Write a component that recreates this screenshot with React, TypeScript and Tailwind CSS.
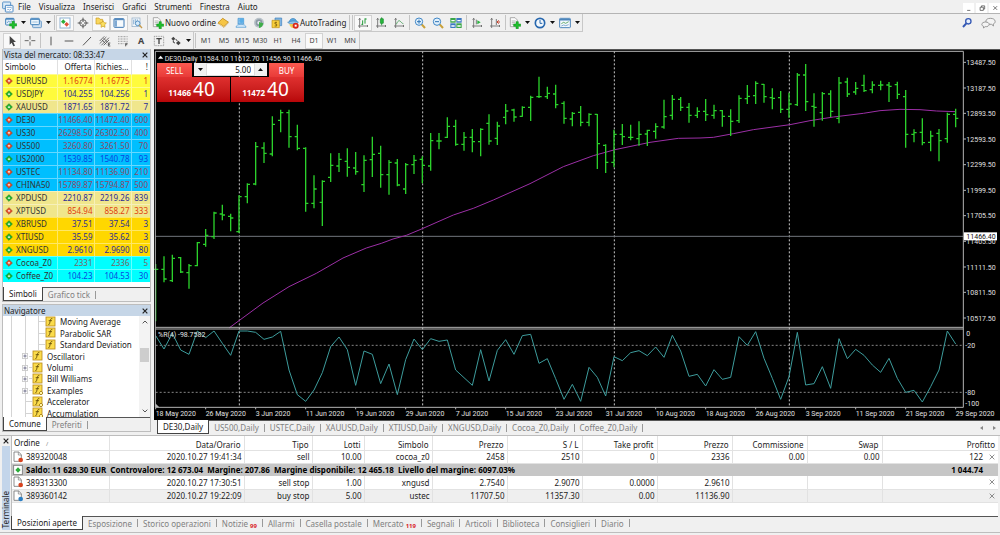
import { ReactNode } from "react"
import clsx from "clsx"

/* ---------- icons (36 x 36 grid, 3 units per pixel) ---------- */

const Icon = ({ children }: { children: ReactNode }) => (
  <svg viewBox="0 0 36 36" className="h-3 w-3 shrink-0" fill="none" aria-hidden>
    {children}
  </svg>
)

const Plus = ({ x, y }: { x: number; y: number }) => (
  <path
    transform={`translate(${x} ${y})`}
    d="M7 0h7v7h7v7h-7v7H7v-7H0V7h7z"
    fill="#1fbf2c"
    stroke="#0a8a18"
    strokeWidth="1.5"
  />
)

const AppLogo = () => (
  <Icon>
    <rect x="2" y="3" width="24" height="20" rx="2" fill="#dcebf8" stroke="#5b93c8" strokeWidth="3" />
    <rect x="10" y="13" width="23" height="20" rx="2" fill="#fff" stroke="#4a87c2" strokeWidth="3" />
    <path d="M14 19h15M15 28l4-4 4 4 5-5" stroke="#4a87c2" strokeWidth="2" />
  </Icon>
)

const NewChartIcon = () => (
  <Icon>
    <rect x="2" y="4" width="25" height="20" rx="2" fill="#e4f0fa" stroke="#3f7fb8" strokeWidth="3" />
    <path d="M3 6h23" stroke="#3f7fb8" strokeWidth="4" />
    <path d="M6 18l5-6 4 4 6-5" stroke="#3f7fb8" strokeWidth="2" />
    <Plus x={14} y={13} />
  </Icon>
)

const ProfilesIcon = () => (
  <Icon>
    <rect x="8" y="12" width="26" height="20" rx="2" fill="#cfe1f2" stroke="#6d9cc8" strokeWidth="3" />
    <rect x="2" y="4" width="26" height="19" rx="2" fill="#eef6fc" stroke="#3f7fb8" strokeWidth="3" />
    <path d="M3 7h24" stroke="#5a93c6" strokeWidth="4" />
    <path d="M7 15h16" stroke="#9cc0de" strokeWidth="3" />
  </Icon>
)

const MarketIcon = () => (
  <Icon>
    <rect x="3" y="3" width="30" height="30" fill="#fff" stroke="#8fb2d2" strokeWidth="3" />
    <path d="M13 7l7 7-7 7-7-7z" fill="#2cae3a" />
    <path d="M23 15l7 7-7 7-7-7z" fill="#e0503a" />
  </Icon>
)

const TargetIcon = () => (
  <Icon>
    <circle cx="18" cy="18" r="10" stroke="#666" strokeWidth="3" />
    <path d="M18 2v13M18 21v13M2 18h13M21 18h13" stroke="#555" strokeWidth="3" />
  </Icon>
)

const NavigatorIcon = () => (
  <Icon>
    <path d="M3 8V3h9l3 4h8v14H3z" fill="#f9d75e" stroke="#c99a1e" strokeWidth="2" />
    <path d="M24 11l3.500 6 6.500 1-5 5 1 8-6-3.500-6 3.500 1-8-5-5 6.500-1z" fill="#fbe05f" stroke="#c99a1e" strokeWidth="2" />
  </Icon>
)

const TerminalIcon = () => (
  <Icon>
    <rect x="3" y="5" width="30" height="26" rx="2" fill="#f6fafd" stroke="#3d78b4" strokeWidth="3" />
    <path d="M4 8h28" stroke="#3d78b4" strokeWidth="3" />
    <rect x="5" y="10" width="7" height="19" fill="#7fa9d2" />
  </Icon>
)

const TesterIcon = () => (
  <Icon>
    <rect x="3" y="3" width="24" height="26" fill="#f2f7fb" stroke="#8ca9c4" strokeWidth="2" />
    <path d="M8 8v14M13 6v10M19 7v5" stroke="#5a8fc0" strokeWidth="2" />
    <circle cx="20" cy="19" r="7" fill="#d5eafa" stroke="#5591c4" strokeWidth="3" />
    <path d="M25 24l8 9" stroke="#c59a4a" strokeWidth="4" />
  </Icon>
)

const PagePlusIcon = () => (
  <Icon>
    <path d="M4 2h14l7 7v20H4z" fill="#fbfbfb" stroke="#888" strokeWidth="2" />
    <path d="M8 12h12M8 17h10M8 22h6" stroke="#999" strokeWidth="2" />
    <Plus x={14} y={14} />
  </Icon>
)

const BookIcon = () => (
  <Icon>
    <path d="M3 19L17 5l17 12-13 14z" fill="#d99a1a" stroke="#a86f0c" strokeWidth="2" />
    <path d="M3 17L17 4l17 11-14 13z" fill="#f6c545" stroke="#c08a1a" strokeWidth="2" />
    <path d="M5 20l15 10 13-13" stroke="#fff3cf" strokeWidth="2" />
  </Icon>
)

const CommunityIcon = () => (
  <Icon>
    <path d="M9 4h17v17H9z" fill="#8cc4ee" stroke="#3f8fcc" strokeWidth="2" />
    <circle cx="20" cy="11" r="7" fill="#5caee6" />
    <path d="M3 31c0-6 6-9 15-9s15 3 15 9z" fill="#cfe6f8" stroke="#4b97d2" strokeWidth="2" />
  </Icon>
)

const SignalIcon = () => (
  <Icon>
    <circle cx="18" cy="17" r="15" fill="#b9c2c9" />
    <circle cx="18" cy="17" r="10" fill="#8c9aa5" />
    <circle cx="18" cy="17" r="5" fill="#e8edf0" />
    <path d="M18 15l13 4c-1 8-6 13-13 14z" fill="#3fae49" />
  </Icon>
)

const ShopIcon = () => (
  <Icon>
    <path d="M12 3h20v23H12z" fill="#7fb4e2" stroke="#3c7fbd" strokeWidth="2" />
    <path d="M3 10h22v22H3z" fill="#f8cf3c" stroke="#bb8c12" strokeWidth="2" />
    <path d="M18 16h-6v5h5v6h-6" stroke="#7b5a06" strokeWidth="2.500" />
  </Icon>
)

const AutoIcon = () => (
  <Icon>
    <path d="M7 15c1-14 21-14 22 0z" fill="#5aa7de" stroke="#3a80ba" strokeWidth="2" />
    <path d="M2 16c8-5 25-5 32-1-4 6-9 6-14 6S6 20 2 16z" fill="#8cc6ee" stroke="#3a80ba" strokeWidth="2" />
    <path d="M7 21c1 7 5 12 12 12s9-6 9-12z" fill="#f2cb52" />
    <circle cx="26" cy="26" r="9" fill="#d9281a" />
    <rect x="23" y="23" width="6" height="6" fill="#fff" />
  </Icon>
)

const Axes = () => (
  <path d="M8 4v29M3 27h30M5 8l3-4 3 4M30 24l3 3-3 3" stroke="#666" strokeWidth="2.500" />
)

const BarsIcon = () => (
  <Icon>
    <Axes />
    <path d="M17 10v14M24 4v16M13 22h4M24 6h5" stroke="#249a3a" strokeWidth="3" />
  </Icon>
)

const CandleIcon = () => (
  <Icon>
    <Axes />
    <path d="M20 1v24" stroke="#168a2a" strokeWidth="2.500" />
    <rect x="16" y="5" width="9" height="14" rx="1" fill="#26b83c" stroke="#168a2a" strokeWidth="2" />
  </Icon>
)

const LineIcon = () => (
  <Icon>
    <Axes />
    <path d="M10 22c4-10 8-13 12-9s5 6 9 7" stroke="#3d9a50" strokeWidth="2.500" />
  </Icon>
)

const ZoomIcon = ({ plus }: { plus?: boolean }) => (
  <Icon>
    <path d="M23 22l10 11" stroke="#c9a13a" strokeWidth="6" />
    <circle cx="15" cy="14" r="11" fill="#e2f1fc" stroke="#3f86c6" strokeWidth="3" />
    <path d={plus ? "M9 14h12M15 8v12" : "M9 14h12"} stroke="#2f74b5" strokeWidth="3" />
  </Icon>
)

const TileIcon = () => (
  <Icon>
    <rect x="1" y="3" width="16" height="14" fill="#3aa648" />
    <rect x="19" y="3" width="16" height="14" fill="#3c78c2" />
    <rect x="1" y="19" width="16" height="14" fill="#3c78c2" />
    <rect x="19" y="19" width="16" height="14" fill="#3aa648" />
    <path d="M4 11h10M22 11h10M4 27h10M22 27h10" stroke="#fff" strokeWidth="4" />
  </Icon>
)

const ScrollIcon = () => (
  <Icon>
    <Axes />
    <path d="M16 8v14" stroke="#666" strokeWidth="2.500" />
    <path d="M19 10l10 6-10 6z" fill="#2bb23f" />
  </Icon>
)

const ShiftIcon = () => (
  <Icon>
    <Axes />
    <path d="M22 6v18" stroke="#666" strokeWidth="2.500" />
    <path d="M33 15H24M29 10l-5 5 5 5" stroke="#c8452f" strokeWidth="3" />
  </Icon>
)

const ClockIcon = () => (
  <Icon>
    <circle cx="18" cy="18" r="14" fill="#f2f8fd" stroke="#2767ae" strokeWidth="5" />
    <path d="M18 9v10h7" stroke="#2767ae" strokeWidth="3" />
  </Icon>
)

const TemplateIcon = () => (
  <Icon>
    <rect x="2" y="4" width="32" height="28" rx="2" fill="#f4f9fd" stroke="#4d85bb" strokeWidth="3" />
    <path d="M3 8h30" stroke="#4d85bb" strokeWidth="5" />
    <path d="M7 20l7-4 6 3 9-5" stroke="#4c9c58" strokeWidth="2.500" />
    <path d="M7 27l7-3 6 2 9-3" stroke="#4d85bb" strokeWidth="2" />
  </Icon>
)

const CursorIcon = () => (
  <Icon>
    <path d="M11 3v26l6-6 5 11 5-2-5-11h8z" fill="#444" />
  </Icon>
)

const CrossIcon = () => (
  <Icon>
    <path d="M18 3v11M18 20v12M2 17h12M22 17h12" stroke="#666" strokeWidth="3" />
  </Icon>
)

const StrokeIcon = ({ d }: { d: string }) => (
  <Icon>
    <path d={d} stroke="#555" strokeWidth="3" />
  </Icon>
)

const ChannelIcon = () => (
  <Icon>
    <path d="M2 26L22 6M7 31L30 8M2 18L16 4M14 31l16-16M8 14l14 14M14 10l12 12" stroke="#555" strokeWidth="2.500" />
    <path d="M34 24h-6v9h6M28 28h5" stroke="#444" strokeWidth="2.500" />
  </Icon>
)

const FiboIcon = () => (
  <Icon>
    <path d="M3 5h29M3 12h29M3 19h29M3 26h19" stroke="#777" strokeWidth="2" strokeDasharray="3 1.500" />
    <path d="M26 34v-9h6M26 29h5" stroke="#444" strokeWidth="2.500" />
  </Icon>
)

const LabelIcon = () => (
  <Icon>
    <rect x="4" y="4" width="28" height="28" stroke="#777" strokeWidth="2" strokeDasharray="3 2" />
    <path d="M10 11h16M18 11v16" stroke="#444" strokeWidth="4" />
  </Icon>
)

const ArrowsIcon = () => (
  <Icon>
    <path d="M10 5l6 6-6 6-6-6z" fill="#444" />
    <path d="M10 17v5l5 2M17 12l5 6" stroke="#444" strokeWidth="3" />
    <path d="M25 17l7 7-7 7-7-7z" fill="#444" />
  </Icon>
)

const FuncIcon = ({ badge }: { badge?: boolean }) => (
  <Icon>
    <rect x="3" y="3" width="27" height="27" fill="#fbdc4c" stroke="#b98d1c" strokeWidth="2.500" />
    <path d="M22 8c-4-1-5 1-6 5l-2 9c-1 4-2 4-4 3M11 14h10" stroke="#5c4606" strokeWidth="2.500" />
    {badge && <path d="M27 21l6 6-6 6-6-6z" fill="#fff3a5" stroke="#a07a10" strokeWidth="2.500" />}
  </Icon>
)

const DiamondIcon = ({ up }: { up: boolean }) => (
  <svg viewBox="0 0 24 24" className="h-2 w-2 shrink-0" aria-hidden>
    <path d="M12 2l10 10-10 10L2 12z" fill={up ? "#22b432" : "#e4502c"} stroke={up ? "#14801f" : "#a8351a"} strokeWidth="2" />
    <path d={up ? "M12 8l4 6H8z" : "M12 16l4-6H8z"} fill="#fff" />
  </svg>
)

const OrderIcon = ({ color }: { color: string }) => (
  <Icon>
    <path d="M6 3h14l8 8v20H6z" fill="#fff" stroke="#777" strokeWidth="2.500" />
    <path d="M19 3v9h9" stroke="#777" strokeWidth="2" />
    <circle cx="26" cy="27" r="7" fill={color} />
  </Icon>
)

const BalanceIcon = () => (
  <Icon>
    <rect x="5" y="4" width="26" height="28" fill="#fff" stroke="#777" strokeWidth="2.500" />
    <path d="M18 10l8 8-8 8-8-8z" fill="#2bad3a" />
  </Icon>
)

/* ---------- toolbars ---------- */

const Sep = () => <span className="mx-px h-[15px] w-px bg-[#c4c4c4]" />

const Caret = () => (
  <svg viewBox="0 0 12 7" className="h-[3px] w-[5px]" aria-hidden>
    <path d="M0 0h12L6 7z" fill="#111" />
  </svg>
)

const Tool = ({ label, pressed, drop, children }: { label: string; pressed?: boolean; drop?: boolean; children: ReactNode }) => (
  <button
    aria-label={label}
    className={clsx(
      "flex h-[16px] items-center justify-center",
      drop ? "w-[25px] gap-1" : "w-[18px]",
      pressed && "border border-[#d2d2d2] bg-[#f9f9f9]"
    )}
  >
    {children}
    {drop && <Caret />}
  </button>
)

const MENU = ["File", "Visualizza", "Inserisci", "Grafici", "Strumenti", "Finestra", "Aiuto"]
const FRAMES = ["M1", "M5", "M15", "M30", "H1", "H4", "D1", "W1", "MN"]

const MenuBar = () => (
  <header className="flex h-[14px] items-center border-b border-[#b4b4b4] pl-0.5">
    <AppLogo />
    <nav className="ml-1 flex flex-1 gap-2">
      {MENU.map((m) => (
        <button key={m}>{m}</button>
      ))}
    </nav>
    <div className="flex gap-0.5 self-end">
      {["M8 24h12", "M8 12h12v12H8zM13 12V7h12v12h-5", "M9 8l14 14M23 8L9 22"].map((d, i) => (
        <button key={d} aria-label={["Riduci", "Ripristina", "Chiudi"][i]} className="flex h-[10px] w-[11px] items-center justify-center bg-white">
          <svg viewBox="0 0 30 30" className="h-2 w-2" fill="none">
            <path d={d} stroke="#555" strokeWidth="3" />
          </svg>
        </button>
      ))}
    </div>
  </header>
)

const MainToolbar = () => (
  <div className="flex h-[18px] items-center">
    <div className="flex h-[18px] items-center border-b border-r border-[#c8c8c8] pl-[3px]">
      <Tool label="Nuovo grafico" drop><NewChartIcon /></Tool>
      <Tool label="Profili" drop><ProfilesIcon /></Tool>
      <Sep />
      <Tool label="Vista del mercato" pressed><MarketIcon /></Tool>
      <Tool label="Finestra dati"><TargetIcon /></Tool>
      <Tool label="Navigatore" pressed><NavigatorIcon /></Tool>
      <Tool label="Terminale" pressed><TerminalIcon /></Tool>
      <Tool label="Tester"><TesterIcon /></Tool>
      <Sep />
      <button className="flex w-[65px] items-center gap-px pl-[3px] whitespace-nowrap"><PagePlusIcon />Nuovo ordine</button>
      <Tool label="MetaEditor"><BookIcon /></Tool>
      <Tool label="Community"><CommunityIcon /></Tool>
      <Tool label="Segnali"><SignalIcon /></Tool>
      <Tool label="Market"><ShopIcon /></Tool>
      <button className="flex w-[62px] items-center gap-px pl-px whitespace-nowrap"><AutoIcon />AutoTrading</button>
      <Sep />
      <Sep />
      <Tool label="Barre" pressed><BarsIcon /></Tool>
      <Tool label="Candele"><CandleIcon /></Tool>
      <Tool label="Linea"><LineIcon /></Tool>
      <Sep />
      <Tool label="Ingrandisci"><ZoomIcon plus /></Tool>
      <Tool label="Riduci"><ZoomIcon /></Tool>
      <Tool label="Affianca"><TileIcon /></Tool>
      <Sep />
      <Tool label="Scorrimento automatico"><ScrollIcon /></Tool>
      <Tool label="Spostamento grafico"><ShiftIcon /></Tool>
      <Sep />
      <Tool label="Indicatori" drop><PagePlusIcon /></Tool>
      <Tool label="Periodi" drop><ClockIcon /></Tool>
      <Tool label="Modelli" drop><TemplateIcon /></Tool>
    </div>
    <div className="ml-auto flex items-center gap-2 pr-1">
      <button aria-label="Cerca">
        <Icon>
          <circle cx="22" cy="13" r="8" fill="#e8f0fb" stroke="#3559b4" strokeWidth="4" />
          <path d="M16 19L6 30" stroke="#3559b4" strokeWidth="6" />
        </Icon>
      </button>
      <button aria-label="Chat">
        <svg viewBox="0 0 44 36" className="h-3 w-[15px]" fill="#f4f4f4" stroke="#888" strokeWidth="2.500">
          <path d="M28 4c8 0 14 4 14 9s-3 7-6 8l1 6-6-5c-9 1-17-3-17-9s6-9 14-9z" />
          <path d="M13 15c7 0 11 3 11 7s-5 8-12 7l-5 4v-5c-3-1-5-3-5-6 0-4 5-7 11-7z" />
        </svg>
      </button>
    </div>
  </div>
)

const DrawToolbar = () => (
  <div className="flex h-[17px] items-center text-[#444]">
    <div className="flex h-[17px] items-center border-r border-[#c8c8c8] pl-[3px]">
      <Tool label="Cursore" pressed><CursorIcon /></Tool>
      <Tool label="Mirino"><CrossIcon /></Tool>
      <Sep />
      <Tool label="Linea verticale"><StrokeIcon d="M18 5v26" /></Tool>
      <Tool label="Linea orizzontale"><StrokeIcon d="M5 18h26" /></Tool>
      <Tool label="Trendline"><StrokeIcon d="M6 31L30 6" /></Tool>
      <Tool label="Canale"><ChannelIcon /></Tool>
      <Tool label="Fibonacci"><FiboIcon /></Tool>
      <Tool label="Testo"><b className="text-[9px]">A</b></Tool>
      <Tool label="Etichetta"><LabelIcon /></Tool>
      <Tool label="Frecce" drop><ArrowsIcon /></Tool>
    </div>
    <div className="flex h-[17px] items-center border-r border-[#c8c8c8] text-[7px]">
      <Sep />
      {FRAMES.map((f) => (
        <button key={f} className={clsx("h-[16px] w-[18px]", f === "D1" && "border border-[#d2d2d2] bg-[#f9f9f9]")}>
          {f}
        </button>
      ))}
    </div>
  </div>
)

/* ---------- side panels ---------- */

const PanelTitle = ({ children }: { children: ReactNode }) => (
  <div className="flex h-[11px] items-center justify-between bg-[#c6d6e7] px-px">
    <span>{children}</span>
    <button aria-label="Chiudi" className="pr-px"><CloseMark /></button>
  </div>
)

const CloseMark = ({ thin }: { thin?: boolean }) => (
  <svg viewBox="0 0 18 18" className="h-[6px] w-[6px]" aria-hidden>
    <path d="M2 2l14 14M16 2L2 16" stroke={thin ? "#777" : "#222"} strokeWidth={thin ? 2.5 : 3.5} />
  </svg>
)

type Tab = { name: string; count?: number }

const Tabs = ({ tabs, children }: { tabs: Tab[]; children?: ReactNode }) => (
  <div className="flex h-[14px] items-stretch text-[#808080]">
    {tabs.map((t, i) => (
      <button
        key={t.name}
        className={clsx(
          "relative flex items-center whitespace-nowrap",
          i === 0
            ? "border-x border-b border-[#444] bg-white px-[5px] text-[#222]"
            : "border-t border-[#555] pr-1.5 pl-[5px] after:absolute after:right-0 after:h-2 after:w-px after:bg-[#999]"
        )}
      >
        {t.name}
        {t.count && <span className="self-end pl-0.5 text-[6px] leading-[8px] font-bold text-[#d8232a]">{t.count}</span>}
      </button>
    ))}
    <div className="flex flex-1 items-center justify-end gap-2 border-t border-[#555] pr-1">{children}</div>
  </div>
)

const YELLOW = "bg-[#fffb3c]"
const KHAKI = "bg-[#f0e68c]"
const SKY = "bg-[#00bfff]"
const GOLD = "bg-[#ffd700]"
const AQUA = "bg-[#00ffff]"
const RED = "text-[#e0400f]"
const NAVY = "text-[#2c2c96]"
const WINE = "text-[#8c4a68]"
const BLUE = "text-[#0a45e0]"

const QUOTES: [string, boolean, string, string, string, string, string][] = [
  ["EURUSD", false, "1.16774", "1.16775", "1", YELLOW, RED],
  ["USDJPY", true, "104.255", "104.256", "1", YELLOW, NAVY],
  ["XAUUSD", true, "1871.65", "1871.72", "7", KHAKI, NAVY],
  ["DE30", false, "11466.40", "11472.40", "600", SKY, WINE],
  ["US30", false, "26298.50", "26302.50", "400", SKY, WINE],
  ["US500", false, "3260.80", "3261.50", "70", SKY, WINE],
  ["US2000", true, "1539.85", "1540.78", "93", SKY, BLUE],
  ["USTEC", false, "11134.80", "11136.90", "210", SKY, WINE],
  ["CHINA50", false, "15789.87", "15794.87", "500", SKY, WINE],
  ["XPDUSD", true, "2210.87", "2219.26", "839", KHAKI, NAVY],
  ["XPTUSD", false, "854.94", "858.27", "333", KHAKI, RED],
  ["XBRUSD", true, "37.51", "37.54", "3", GOLD, NAVY],
  ["XTIUSD", true, "35.59", "35.62", "3", GOLD, NAVY],
  ["XNGUSD", true, "2.9610", "2.9690", "80", GOLD, NAVY],
  ["Cocoa_Z0", false, "2331", "2336", "5", AQUA, "text-[#7c6464]"],
  ["Coffee_Z0", true, "104.23", "104.53", "30", AQUA, BLUE],
]

const MarketWatch = () => (
  <section className="border-x border-b border-[#bdbdbd]">
    <PanelTitle>Vista del mercato: 08:33:47</PanelTitle>
    <div className="bg-white pb-[5px]">
      <table className="w-full table-fixed border-collapse text-right">
        <colgroup>
          <col />
          <col className="w-[37px]" />
          <col className="w-[37px]" />
          <col className="w-[19px]" />
        </colgroup>
        <thead>
          <tr className="h-[14px]">
            <th className="pl-0.5 text-left font-normal">Simbolo</th>
            <th className="border-l border-[#e0e0e0] pr-0.5 font-normal">Offerta</th>
            <th className="border-l border-[#e0e0e0] pr-0.5 font-normal">Richies...</th>
            <th className="border-l border-[#e0e0e0] pr-0.5 font-normal">!</th>
          </tr>
        </thead>
        <tbody>
          {QUOTES.map(([name, up, bid, ask, spread, bg, fg]) => (
            <tr key={name} className={clsx("h-[13px] border-t border-white/40", bg, fg)}>
              <td className="text-left text-[#333]">
                <span className="flex items-center gap-[3px] pl-0.5">
                  <DiamondIcon up={up} />
                  {name}
                </span>
              </td>
              <td className="border-l border-white/40 pr-px">{bid}</td>
              <td className="border-l border-white/40 pr-px">{ask}</td>
              <td className="border-l border-white/40 pr-0.5">{spread}</td>
            </tr>
          ))}
        </tbody>
      </table>
    </div>
    <Tabs tabs={[{ name: "Simboli" }, { name: "Grafico tick" }]} />
  </section>
)

const TREE: { name: string; deep?: boolean; plus?: boolean; badge?: boolean }[] = [
  { name: "Moving Average", deep: true },
  { name: "Parabolic SAR", deep: true },
  { name: "Standard Deviation", deep: true },
  { name: "Oscillatori", plus: true },
  { name: "Volumi", plus: true },
  { name: "Bill Williams", plus: true },
  { name: "Examples", plus: true, badge: true },
  { name: "Accelerator", badge: true },
  { name: "Accumulation", badge: true },
]

const Navigator = () => (
  <section className="mt-0.5 border border-[#bdbdbd]">
    <PanelTitle>Navigatore</PanelTitle>
    <div className="flex h-[101px] overflow-hidden bg-white">
      <ul className="grid h-[103px] flex-1 auto-rows-fr">
        {TREE.map((n) => (
          <li key={n.name} className="flex items-center">
            <span className="h-full w-[9px] border-r border-[#d4d4d4]" />
            <span className="relative h-full w-[14px] border-r border-[#d4d4d4]">
              {n.plus && (
                <svg viewBox="0 0 18 18" className="absolute top-[3px] -right-[3px] h-[6px] w-[6px]" aria-hidden>
                  <path d="M1 1h16v16H1z" fill="#fff" stroke="#aaa" strokeWidth="2" />
                  <path d="M4 9h10M9 4v10" stroke="#446" strokeWidth="2" />
                </svg>
              )}
            </span>
            {n.deep && <span className="h-full w-[13px] border-r border-[#d4d4d4]" />}
            <span className={clsx("h-px bg-[#d4d4d4]", n.plus ? "ml-[3px] w-[3px]" : "w-[6px]")} />
            <FuncIcon badge={n.badge} />
            <span className="pl-[3px] whitespace-nowrap">{n.name}</span>
          </li>
        ))}
      </ul>
      <div className="flex w-[11px] flex-col items-center justify-between bg-[#f3f3f3] py-1">
        <svg viewBox="0 0 18 12" className="h-1 w-[6px]" fill="none"><path d="M2 10l7-7 7 7" stroke="#555" strokeWidth="3" /></svg>
        <span className="mb-6 h-[14px] w-[9px] bg-[#cdcdcd]" />
        <svg viewBox="0 0 18 12" className="h-1 w-[6px]" fill="none"><path d="M2 2l7 7 7-7" stroke="#555" strokeWidth="3" /></svg>
      </div>
    </div>
    <Tabs tabs={[{ name: "Comune" }, { name: "Preferiti" }]} />
  </section>
)

/* ---------- chart ---------- */

// high, low, open, close for each daily bar
const BARS = [
  [648, 820, 664, 664], [625, 703, 664, 693], [620, 702, 698, 631], [627, 675, 629, 672], [648, 722, 674, 653],
  [582, 655, 653, 584], [543, 596, 589, 562], [491, 573, 566, 495], [470, 517, 498, 501], [497, 550, 505, 510],
  [442, 555, 551, 446], [406, 466, 446, 409], [282, 412, 408, 296], [283, 345, 300, 316], [205, 325, 318, 229],
  [185, 253, 217, 194], [185, 299, 194, 266], [230, 307, 266, 301], [298, 491, 301, 466], [382, 481, 466, 423],
  [397, 534, 463, 400], [316, 402, 388, 352], [315, 372, 354, 334], [301, 386, 340, 358], [312, 380, 360, 371],
  [322, 432, 410, 337], [266, 387, 335, 319], [293, 419, 316, 380], [336, 440, 380, 343], [333, 415, 345, 411],
  [345, 438, 423, 350], [321, 378, 350, 337], [325, 406, 334, 352], [255, 368, 354, 278], [255, 304, 279, 279],
  [208, 270, 268, 235], [215, 293, 235, 289], [252, 308, 289, 268], [243, 313, 268, 281], [241, 325, 281, 244],
  [199, 290, 226, 279], [221, 291, 271, 234], [168, 229, 208, 189], [182, 221, 186, 207], [175, 206, 205, 178],
  [143, 219, 178, 148], [86, 150, 146, 146], [116, 153, 146, 136], [110, 181, 138, 170], [160, 227, 166, 211],
  [192, 235, 213, 196], [174, 235, 193, 223], [196, 235, 223, 199], [198, 363, 199, 287], [289, 375, 292, 343],
  [245, 358, 343, 259], [228, 291, 259, 266], [230, 277, 268, 268], [220, 293, 272, 259], [245, 294, 258, 247],
  [226, 272, 250, 236], [155, 242, 237, 206], [141, 215, 202, 154], [147, 189, 154, 178], [165, 224, 178, 202],
  [178, 210, 202, 190], [153, 219, 190, 200], [170, 212, 202, 188], [186, 236, 188, 205], [184, 264, 205, 220],
  [142, 225, 218, 151], [111, 168, 152, 145], [100, 168, 143, 106], [108, 164, 109, 146], [121, 184, 149, 151],
  [129, 195, 149, 184], [134, 209, 184, 168], [75, 174, 170, 81], [48, 189, 81, 161], [136, 236, 175, 178],
  [132, 218, 194, 137], [127, 207, 138, 190], [87, 226, 211, 105], [89, 147, 102, 138], [102, 140, 132, 121],
  [80, 132, 112, 128], [100, 136, 125, 111], [98, 127, 112, 111], [102, 162, 111, 115], [101, 153, 110, 139],
  [126, 299, 146, 259], [244, 283, 259, 254], [211, 292, 253, 284], [248, 310, 283, 264], [243, 340, 256, 278],
  [194, 284, 272, 199], [182, 238, 199, 211],
]

const AVERAGE =
  "225,840 255,818 327,765 405,716 487,676 567,630 637,600 682,586 717,573 757,562 798,545 898,501 958,481 " +
  "1018,456 1128,407 1228,356 1318,323 1383,305 1488,283 1573,271 1638,270 1678,268 1738,257 1798,245 1908,230 " +
  "1968,218 2038,207 2128,196 2178,188 2238,184 2298,185 2348,189 2405,191"

const PERCENT_R = [
  32, 72, 25, 75, 88, 18, 38, 18, 55, 91, 18, 18, 22, 43, 36, 19, 135, 209, 229, 195, 143, 65, 36, 74, 181, 78, 88,
  176, 117, 209, 104, 42, 74, 41, 49, 45, 135, 158, 181, 74, 168, 76, 44, 88, 32, 28, 115, 101, 161, 223, 178, 229,
  127, 157, 213, 95, 107, 83, 77, 92, 66, 97, 31, 78, 154, 148, 183, 134, 163, 157, 35, 61, 20, 100, 160, 223, 155,
  22, 180, 176, 125, 190, 41, 101, 73, 91, 120, 142, 100, 160, 202, 196, 231, 185, 135, 18, 57,
]

const PRICES = ["13487.50", "13187.50", "12893.50", "12593.50", "12299.50", "11999.50", "11705.50", "11405.50", "11111.50", "10811.50", "10517.50"]

const DATES = [
  "18 May 2020", "26 May 2020", "3 Jun 2020", "11 Jun 2020", "19 Jun 2020", "29 Jun 2020", "7 Jul 2020", "15 Jul 2020", "23 Jul 2020",
  "31 Jul 2020", "10 Aug 2020", "18 Aug 2020", "26 Aug 2020", "3 Sep 2020", "11 Sep 2020", "21 Sep 2020", "29 Sep 2020",
]

const barX = (i: number) => 5 + i * 25

const barsPath = BARS.map(([h, l, o, c], i) => {
  const x = barX(i)
  return `M${x} ${h}V${l}M${x - 8} ${o}H${x}M${x} ${c}H${x + 8}`
}).join("")

const Plot = () => (
  <svg viewBox="0 6 2538 1110" className="block w-full bg-black font-['Roboto'] text-[21px]" fill="none">
    <g stroke="#c8c8c8" strokeWidth="3" strokeDasharray="6 6">
      {[256, 806, 1381, 1906].map((x) => (
        <path key={x} d={`M${x} 10V1078`} />
      ))}
      <path d="M5 892H2428M5 1033H2428" strokeWidth="2" />
    </g>
    <path d="M4 565H2428" stroke="#70757c" strokeWidth="3" />
    <polyline points={AVERAGE} stroke="#9c2fa6" strokeWidth="3" />
    <path d={barsPath} stroke="#2bd02b" strokeWidth="4" />
    <polyline points={PERCENT_R.map((y, i) => `${barX(i)},${y + 831}`).join(" ")} stroke="#3d9c9c" strokeWidth="3" />
    <path d="M4 10H2428M4 838H2428M4 843H2428M4 1078H2428M4 10V1078M2428 10V1078" stroke="#b4b4b4" strokeWidth="3" />
    <path d="M4 1066v12h12z" fill="#b4b4b4" />

    <path d="M12 32l8-9 8 9z" fill="#fff" />
    <g fill="#e0e0e0">
      <text x="32" y="38">DE30,Daily</text>
      <text x="135" y="38">11584.10 11612.70 11456.90 11466.40</text>
      <text x="12" y="867">%R(4) -98.7582</text>
      {PRICES.map((p, i) => {
        const y = Math.round(43 + i * 76.7)
        return (
          <g key={p}>
            <path d={`M2428 ${y}h8`} stroke="#b4b4b4" strokeWidth="3" />
            <text x="2437" y={y + 8}>{p}</text>
          </g>
        )
      })}
      <text x="2437" y="865">0</text>
      <text x="2434" y="900">-20</text>
      <text x="2434" y="1041">-80</text>
      <text x="2434" y="1075">-100</text>
      {DATES.map((d, i) => (
        <g key={d}>
          <path d={`M${barX(i * 6)} 1078v6`} stroke="#b4b4b4" strokeWidth="3" />
          <text x={barX(i * 6)} y="1104">{d}</text>
        </g>
      ))}
    </g>
    <rect x="2430" y="553" width="99" height="24" fill="#fff" />
    <text x="2437" y="573" fill="#111">11466.40</text>
  </svg>
)

const DealBox = ({ price, pips }: { price: string; pips: string }) => (
  <button className="flex h-[25px] flex-1 items-baseline justify-center bg-linear-to-b from-[#e0302f] to-[#b80508] pr-1 leading-[24px] text-white">
    <b className="text-[8px]">{price}</b>
    <span className="pl-0.5 text-[19px]">{pips}</span>
  </button>
)

const OneClick = () => (
  <div className="absolute top-[13px] left-[3px] w-[147px]">
    <div className="flex h-[14px] text-white">
      <button className="w-[35px] bg-linear-to-b from-[#fb5a50] to-[#e83a38]">SELL</button>
      <div className="mx-0.5 flex h-[13px] flex-1 bg-white text-[#111]">
        <button aria-label="Meno" className="flex w-3 items-center justify-center bg-[#f0f0f0]"><Caret /></button>
        <input aria-label="Volume" defaultValue="5.00" className="w-0 flex-1 border border-[#ddd] px-[3px] text-right outline-none" />
        <button aria-label="Più" className="flex w-3 rotate-180 items-center justify-center bg-[#f0f0f0]"><Caret /></button>
      </div>
      <button className="w-[35px] bg-linear-to-b from-[#fb5a50] to-[#e83a38]">BUY</button>
    </div>
    <div className="flex gap-px">
      <DealBox price="11466" pips="40" />
      <DealBox price="11472" pips="40" />
    </div>
  </div>
)

const CHARTS = ["DE30,Daily", "US500,Daily", "USTEC,Daily", "XAUUSD,Daily", "XTIUSD,Daily", "XNGUSD,Daily", "Cocoa_Z0,Daily", "Coffee_Z0,Daily"]

const ChartArea = () => (
  <main className="min-w-0 flex-1">
    <div className="relative border-t border-[#555]">
      <Plot />
      <OneClick />
    </div>
    <div className="pl-[3px]">
      <Tabs tabs={CHARTS.map((name) => ({ name }))}>
        <svg viewBox="0 0 9 12" className="h-1 w-[3px]"><path d="M9 0v12L0 6z" fill="#888" /></svg>
        <svg viewBox="0 0 9 12" className="ml-0.5 h-1 w-[3px]"><path d="M0 0v12l9-6z" fill="#888" /></svg>
      </Tabs>
    </div>
  </main>
)

/* ---------- terminal ---------- */

const COLUMNS = ["Data/Orario", "Tipo", "Lotti", "Simbolo", "Prezzo", "S / L", "Take profit", "Prezzo", "Commissione", "Swap"]

const OrderRow = ({ id, color, cells, profit, shade }: { id: string; color: string; cells: string[]; profit?: string; shade?: boolean }) => (
  <tr className={clsx("h-[13px] border-b border-[#e2e2e2]", shade && "bg-[#efefef]")}>
    <td className="text-left">
      <span className="flex items-center gap-0.5">
        <OrderIcon color={color} />
        {id}
      </span>
    </td>
    {cells.map((c, i) => (
      <td key={i} className="border-l border-[#e2e2e2] pr-0.5">{c}</td>
    ))}
    <td className="border-l border-[#e2e2e2]">
      <span className="flex items-center justify-end gap-[6px] pr-[3px]">
        {profit}
        <button aria-label="Chiudi ordine"><CloseMark thin /></button>
      </span>
    </td>
  </tr>
)

const TERMINAL_TABS: Tab[] = [
  { name: "Posizioni aperte" },
  { name: "Esposizione" },
  { name: "Storico operazioni" },
  { name: "Notizie", count: 99 },
  { name: "Allarmi" },
  { name: "Casella postale" },
  { name: "Mercato", count: 119 },
  { name: "Segnali" },
  { name: "Articoli" },
  { name: "Biblioteca" },
  { name: "Consiglieri" },
  { name: "Diario" },
]

const Terminal = () => (
  <section className="mt-px flex border-y border-[#bdbdbd] pr-0.5 pb-0.5">
    <div className="flex w-[11px] flex-col items-center gap-0.5 pt-0.5">
      <button aria-label="Chiudi"><CloseMark /></button>
      <div className="flex w-2 flex-1 items-center bg-[#c3d5ea] [writing-mode:vertical-rl]">
        <span className="mt-auto rotate-180 pt-px">Terminale</span>
      </div>
    </div>
    <div className="min-w-0 flex-1">
      <div className="border-l border-[#bdbdbd] bg-white pb-[13px]">
        <table className="w-full table-fixed border-collapse text-right">
          <colgroup>
            <col className="w-[97px]" />
            <col className="w-[135px]" />
            <col className="w-[68px]" />
            <col className="w-[52px]" />
            <col className="w-[68px]" />
            {COLUMNS.slice(4).map((c, i) => (
              <col key={i} className="w-[75px]" />
            ))}
            <col />
          </colgroup>
          <thead>
            <tr className="h-[14px] border-b border-[#e2e2e2] align-bottom">
              <th className="pl-0.5 text-left font-normal">Ordine <span className="pl-1 text-[6px] text-[#888]">/</span></th>
              {COLUMNS.map((c, i) => (
                <th key={i} className="border-l border-[#e2e2e2] pr-[3px] font-normal">{c}</th>
              ))}
              <th className="border-l border-[#e2e2e2] pr-[3px] font-normal">Profitto</th>
            </tr>
          </thead>
          <tbody>
            <OrderRow
              id="389320048"
              color="#d8431f"
              cells={["2020.10.27 19:41:34", "sell", "10.00", "cocoa_z0", "2458", "2510", "0", "2336", "0.00", "0.00"]}
              profit="122"
            />
            <tr className="h-[13px] bg-[#c6c6c6] font-bold text-black">
              <td colSpan={11} className="text-left">
                <span className="flex items-center gap-0.5 whitespace-pre">
                  <BalanceIcon />
                  {"Saldo: 11 628.30 EUR  Controvalore: 12 673.04  Margine: 207.86  Margine disponibile: 12 465.18  Livello del margine: 6097.03%"}
                </span>
              </td>
              <td className="pr-[15px]">1 044.74</td>
            </tr>
            <OrderRow
              id="389313300"
              color="#d8431f"
              cells={["2020.10.27 17:30:51", "sell stop", "1.00", "xngusd", "2.7540", "2.9070", "0.0000", "2.9610", "", ""]}
            />
            <OrderRow
              id="389360142"
              color="#2c7fc4"
              cells={["2020.10.27 19:22:09", "buy stop", "5.00", "ustec", "11707.50", "11357.30", "0.00", "11136.90", "", ""]}
              shade
            />
          </tbody>
        </table>
      </div>
      <Tabs tabs={TERMINAL_TABS} />
    </div>
  </section>
)

const App = () => (
  <div className="min-h-screen bg-[#f0f0f0] font-['Noto_Sans',sans-serif] text-[8px] leading-[11px] text-[#222]">
    <MenuBar />
    <MainToolbar />
    <DrawToolbar />
    <div className="flex">
      <aside className="w-[154px] shrink-0 pr-[3px] pl-0.5">
        <MarketWatch />
        <Navigator />
      </aside>
      <ChartArea />
    </div>
    <Terminal />
  </div>
)

export default App
